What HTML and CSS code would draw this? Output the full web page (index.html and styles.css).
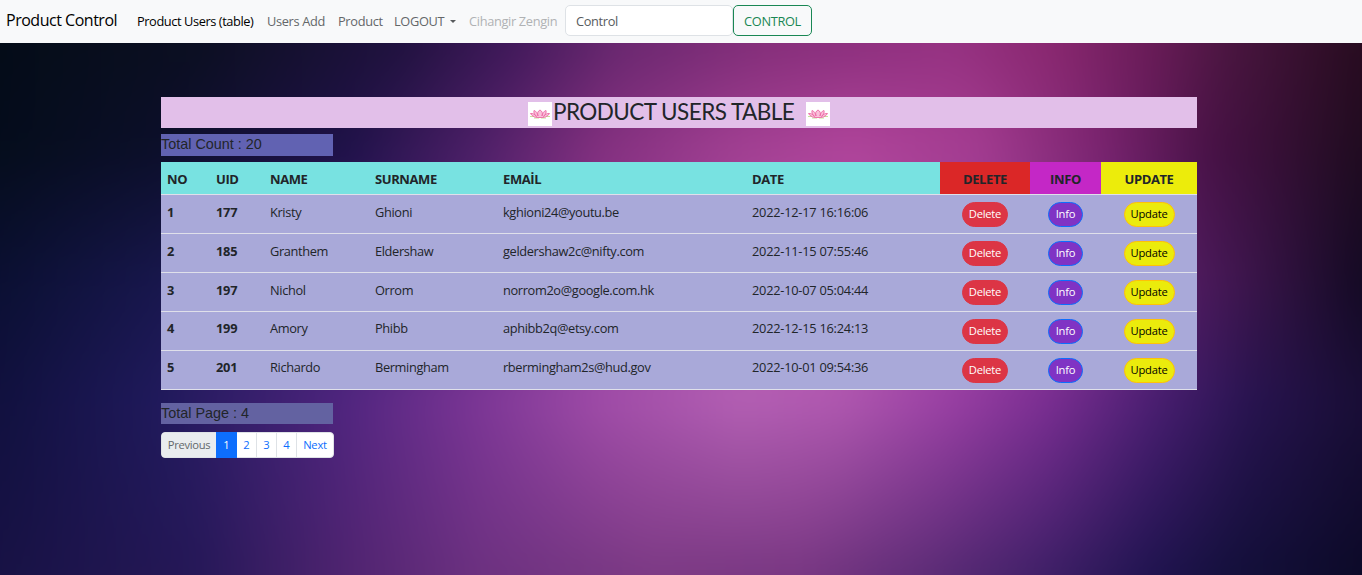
FILE: index.html
```html
<!DOCTYPE html>
<html lang="en">
<head>
<meta charset="utf-8">
<title>Product Control</title>
<link rel="stylesheet" href="styles.css">
</head>
<body>
<div class="backdrop"><div class="glows"><div class="glow g1"></div><div class="glow g2"></div><div class="glow g3"></div><div class="glow g4"></div><div class="glow g5"></div></div></div>
<svg class="defs" width="0" height="0"><symbol id="lotus" viewBox="0 0 24 24"><rect width="24" height="24" fill="#fff"/><path d="M2 14.500h4M18 14.500h4M6 16h5M13 16h5" stroke="#c5e39b" stroke-width="1" fill="none"/><path d="M12 15.500C8 16 4 14.500 2.500 11.500C5 11 7 12.500 8.500 14.500C6 12 5.500 10 6 8.500C8 9 9.500 11 10 14C9 11 10 9 12 8C14 9 15 11 14 14C14.500 11 16 9 18 8.500C18.500 10 18 12 15.500 14.500C17 12.500 19 11 21.500 11.500C20 14.500 16 16 12 15.500Z" fill="#f9bfd9" stroke="#ec6aa5" stroke-width=".9"/></symbol></svg>
<nav class="navbar">
  <a class="brand">Product Control</a>
  <a class="link active">Product Users (table)</a>
  <a class="link add">Users Add</a>
  <a class="link product">Product</a>
  <a class="link logout">LOGOUT <i class="caret"></i></a>
  <a class="link disabled">Cihangir Zengin</a>
  <div class="search">Control</div>
  <button class="control">CONTROL</button>
</nav>
<main class="container">
  <h1 class="title"><svg class="lotus"><use href="#lotus"/></svg><span>PRODUCT USERS TABLE</span><svg class="lotus last"><use href="#lotus"/></svg></h1>
  <div class="total count">Total Count : 20</div>
  <table class="users">
    <colgroup><col class="c1"><col class="c2"><col class="c3"><col class="c4"><col class="c5"><col class="c6"><col class="c7"><col class="c8"><col class="c9"></colgroup>
    <thead><tr><th>NO</th><th>UID</th><th>NAME</th><th>SURNAME</th><th>EMAİL</th><th>DATE</th><th class="h-del">DELETE</th><th class="h-info">INFO</th><th class="h-upd">UPDATE</th></tr></thead>
    <tbody>
    <tr><th>1</th><th>177</th><td>Kristy</td><td>Ghioni</td><td>kghioni24@youtu.be</td><td class="date">2022-12-17 16:16:06</td><td class="act"><button class="btn del">Delete</button></td><td class="act"><button class="btn info">Info</button></td><td class="act"><button class="btn upd">Update</button></td></tr>
    <tr><th>2</th><th>185</th><td>Granthem</td><td>Eldershaw</td><td>geldershaw2c@nifty.com</td><td class="date">2022-11-15 07:55:46</td><td class="act"><button class="btn del">Delete</button></td><td class="act"><button class="btn info">Info</button></td><td class="act"><button class="btn upd">Update</button></td></tr>
    <tr><th>3</th><th>197</th><td>Nichol</td><td>Orrom</td><td>norrom2o@google.com.hk</td><td class="date">2022-10-07 05:04:44</td><td class="act"><button class="btn del">Delete</button></td><td class="act"><button class="btn info">Info</button></td><td class="act"><button class="btn upd">Update</button></td></tr>
    <tr class="tight"><th>4</th><th>199</th><td>Amory</td><td>Phibb</td><td>aphibb2q@etsy.com</td><td class="date">2022-12-15 16:24:13</td><td class="act"><button class="btn del">Delete</button></td><td class="act"><button class="btn info">Info</button></td><td class="act"><button class="btn upd">Update</button></td></tr>
    <tr class="tight"><th>5</th><th>201</th><td>Richardo</td><td>Bermingham</td><td>rbermingham2s@hud.gov</td><td class="date">2022-10-01 09:54:36</td><td class="act"><button class="btn del">Delete</button></td><td class="act"><button class="btn info">Info</button></td><td class="act"><button class="btn upd">Update</button></td></tr>
    </tbody>
  </table>
  <div class="total pages">Total Page : 4</div>
  <div class="pagination"><a class="pg prev">Previous</a><a class="pg on">1</a><a class="pg">2</a><a class="pg">3</a><a class="pg">4</a><a class="pg next">Next</a></div>
</main>
</body>
</html>
```
FILE: styles.css
```css
* { box-sizing: border-box; }
body { margin: 0; height: 575px; overflow: hidden; background: #15113f; color: #212529; font: 12.8px/19.2px "Open Sans", "Noto Sans", sans-serif; }
.defs { position: absolute; }
/* Each glow fades in over the one above it; the 40px bleed keeps the blur off the edges */
.backdrop { position: absolute; inset: 43px 0 0; z-index: -1; overflow: hidden; }
.glows { position: absolute; inset: -40px; filter: blur(14px); }
.glow { position: absolute; inset: 0; }
.g1 { background: linear-gradient(90deg, #040c18 40px, #0c0f22 240px, #20123f 440px, #40195a 550px, #6a2870 660px, #862f7b 810px, #963282 990px, #8a2870 1090px, #6a1c58 1190px, #4a1640 1270px, #280c20 1402px); }
.g2 { background: linear-gradient(90deg, #050d1c 40px, #0c0f2a 200px, #20124a 390px, #4e2068 520px, #83307f 640px, #a03f91 770px, #b0459b 890px, #a33c90 1020px, #7a2470 1140px, #481246 1250px, #200c20 1402px); mask-image: linear-gradient(transparent 40px, #000 145px); }
.g3 { background: linear-gradient(90deg, #0b1033 40px, #18174d 200px, #40206e 440px, #8a3a94 640px, #b454a8 840px, #8c3490 1090px, #4c1a5c 1240px, #140a24 1402px); mask-image: linear-gradient(transparent 145px, #000 280px); }
.g4 { background: linear-gradient(90deg, #11113f 40px, #201a5c 200px, #4f257f 380px, #7a3595 510px, #a04ca8 640px, #b460b4 780px, #b058b0 880px, #9a40a4 990px, #7a2e92 1090px, #481e70 1200px, #281450 1290px, #190e36 1402px); mask-image: linear-gradient(transparent 280px, #000 397px); }
.g5 { background: linear-gradient(90deg, #181245 40px, #261858 240px, #502470 390px, #6c3180 520px, #7c3a84 690px, #783782 840px, #5c2c76 970px, #402068 1080px, #201450 1190px, #14103c 1270px, #0c0a28 1402px); mask-image: linear-gradient(transparent 397px, #000 572px); }

.navbar { height: 43px; background: #f8f9fa; display: flex; align-items: center; padding: 0 6px; white-space: nowrap; }
.brand { width: 131px; font-size: 16px; letter-spacing: -.48px; color: #000; margin-top: -2px; }
.link { color: #646769; letter-spacing: -.33px; }
.active { width: 130px; color: #000; letter-spacing: -.41px; }
.add { width: 71px; }
.product { width: 56px; }
.logout { width: 75px; }
.disabled { width: 96px; color: #b0b2b4; }
.caret { display: inline-block; margin-left: 3px; vertical-align: 3px; border: 3px solid transparent; border-top-color: #585b5d; border-bottom: 0; }
.search { width: 168px; height: 31px; margin-top: -2px; border: 1px solid #dee2e6; border-radius: 5px; background: #fff; padding: 6px 10px; letter-spacing: -.35px; color: #585b5d; }
.control { width: 79px; height: 31px; margin-top: -2px; border: 1px solid #198754; border-radius: 5px; background: transparent; color: #198754; font: inherit; letter-spacing: -.35px; padding: 2px 0 0; }

.container { width: 1036px; margin: 54px 0 0 161px; }
.title { margin: 0; height: 31px; background: #e2bfe9; display: flex; justify-content: center; font: 400 22.5px/30px Lato, sans-serif; }
.title span { width: 242px; margin-left: 1px; white-space: nowrap; letter-spacing: -.55px; }
.lotus { width: 24px; height: 24px; margin-top: 5px; }
.last { margin-left: 11px; }
.total { width: 172px; font: 14.4px/21px "Liberation Sans", Arial, sans-serif; }
.count { height: 22px; margin-top: 6px; background: #6162b2; }
.users { width: 1036px; margin-top: 6px; border-collapse: separate; border-spacing: 0; table-layout: fixed; background: #a9a9d9; }
.c1 { width: 49px; } .c2 { width: 54px; } .c3 { width: 105px; } .c4 { width: 128px; } .c5 { width: 249px; } .c6 { width: 194px; } .c7 { width: 90px; } .c8 { width: 71px; } .c9 { width: 96px; }
.users th, .users td { text-align: left; vertical-align: top; padding: 8px 6px 0; height: 39px; border-bottom: 1px solid #dfe0ea; letter-spacing: -.36px; white-space: nowrap; }
.users tbody th, .users .date { letter-spacing: -.24px; }
.users .tight th, .users .tight td { padding-top: 7px; }
.users thead th { height: 33px; padding-top: 8px; background: #78e2e1; font-size: 13px; letter-spacing: -.4px; }
.users thead .h-del { background: #db2727; text-align: center; }
.users thead .h-info { background: #c427c6; text-align: center; }
.users thead .h-upd { background: #ecec0b; text-align: center; }
.users .act { text-align: center; padding: 7px 0 0; line-height: 0; }
.btn { height: 25px; border: 1px solid; border-radius: 13px; padding: 0 0 2px; font: 11.2px/17px "Open Sans", sans-serif; letter-spacing: -.25px; }
.del { width: 46px; background: #dc3545; border-color: #dc3545; color: #fff; }
.info { width: 35px; background: #8033c4; border-color: #0d6efd; color: #fff; }
.upd { width: 51px; background: #ebeb0c; border-color: #ffc107; color: #000; }
.pages { height: 21px; margin-top: 13px; background: #6362a1; }
.pagination { display: flex; width: 173px; height: 26px; margin-top: 8px; border: 1px solid #dee2e6; border-radius: 4px; background: #fff; font-size: 11.2px; line-height: 24px; text-align: center; }
.pg { width: 20px; border-left: 1px solid #dee2e6; color: #0d6efd; }
.prev { width: 54px; border: 0; background: #e9ecef; color: #63686c; letter-spacing: -.3px; border-radius: 3px 0 0 3px; }
.on { width: 21px; margin: -1px 0; line-height: 26px; border: 0; background: #0d6efd; color: #fff; }
.on + .pg { border: 0; width: 19px; }
.next { flex: 1; letter-spacing: -.2px; }
```
